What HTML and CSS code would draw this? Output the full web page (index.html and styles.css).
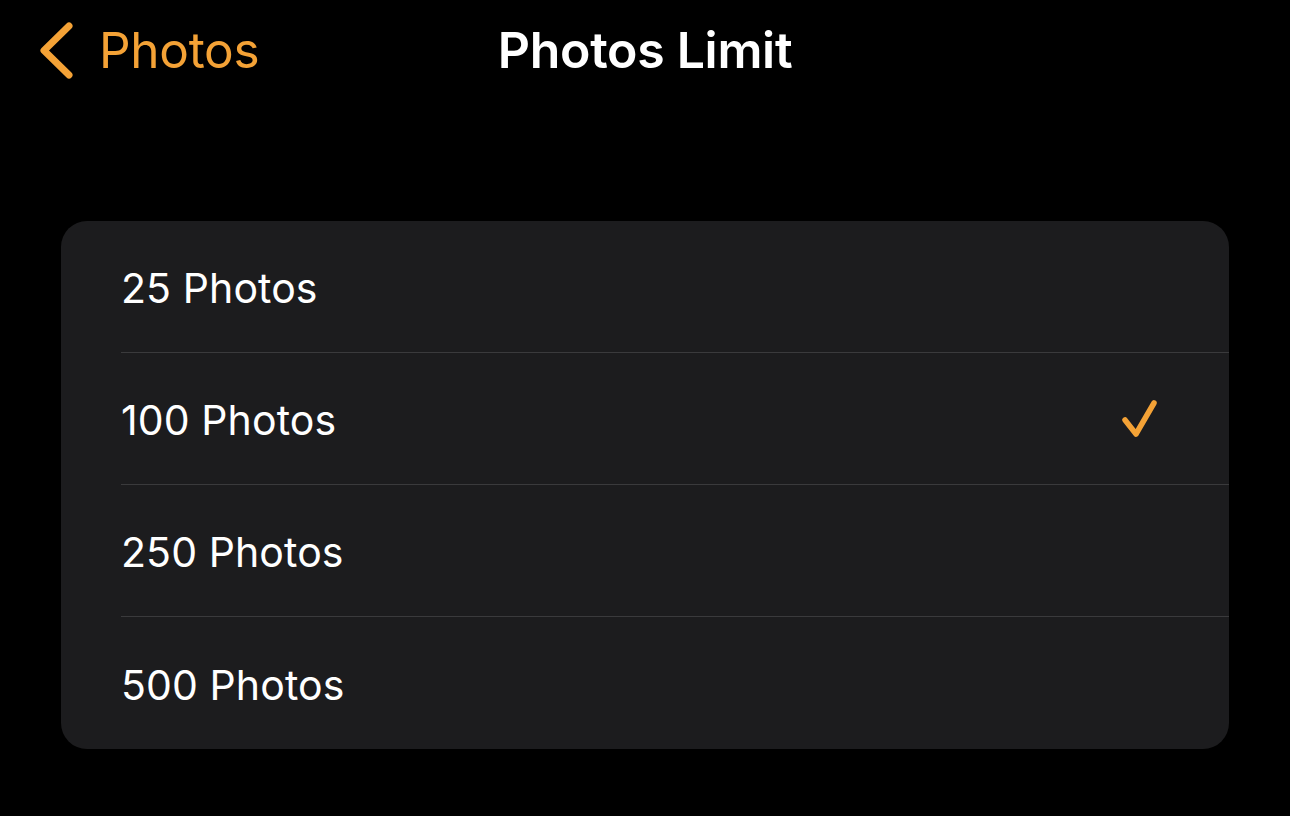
FILE: index.html
```html
<!DOCTYPE html>
<html>
<head>
<meta charset="utf-8">
<link rel="stylesheet" href="styles.css">
</head>
<body>
<header class="nav">
  <div class="back">
    <svg class="chev" width="40" height="60" viewBox="0 0 40 60"><path d="M35 6 L10 30.5 L35 55" fill="none" stroke="#F4A236" stroke-width="7" stroke-linecap="round" stroke-linejoin="round"/></svg>
    <span class="back-text">Photos</span>
  </div>
  <h1 class="title">Photos Limit</h1>
  <div></div>
</header>
<main class="content">
  <ul class="list">
    <li class="row"><span>25 Photos</span></li>
    <li class="row"><span>100 Photos</span>
      <svg class="check" width="44" height="44" viewBox="0 0 44 44"><path d="M5 23 L16 37 L34 6" fill="none" stroke="#F4A236" stroke-width="5.5" stroke-linecap="round" stroke-linejoin="round"/></svg>
    </li>
    <li class="row"><span>250 Photos</span></li>
    <li class="row"><span>500 Photos</span></li>
  </ul>
</main>
</body>
</html>
```
FILE: styles.css
```css
html, body {
  margin: 0;
  padding: 0;
  background: #000;
  width: 1290px;
  height: 816px;
  overflow: hidden;
  font-family: Inter, "Liberation Sans", sans-serif;
  color: #fff;
}
.nav {
  height: 100px;
  display: grid;
  grid-template-columns: 1fr auto 1fr;
  align-items: center;
}
.back {
  display: flex;
  align-items: center;
  padding-left: 34px;
  color: #F4A236;
}
.chev {
  display: block;
  margin-right: 25px;
}
.back-text {
  font-size: 49.5px;
  font-weight: 400;
  letter-spacing: -0.3px;
}
.title {
  margin: 0;
  font-size: 50px;
  font-weight: 600;
  letter-spacing: -0.3px;
}
.content {
  padding: 121px 61px 0 61px;
}
.list {
  list-style: none;
  margin: 0;
  padding: 0;
  background: #1C1C1E;
  border-radius: 26px;
  overflow: hidden;
}
.row {
  height: 132px;
  margin-left: 60px;
  padding-right: 65px;
  padding-top: 3px;
  display: flex;
  align-items: center;
  justify-content: space-between;
  font-size: 41px;
  letter-spacing: 0.1px;
  border-bottom: 1px solid #3A3A3C;
  box-sizing: border-box;
}
.row:last-child {
  border-bottom: none;
}
.check {
  display: block;
  margin-top: -3px;
}
```
